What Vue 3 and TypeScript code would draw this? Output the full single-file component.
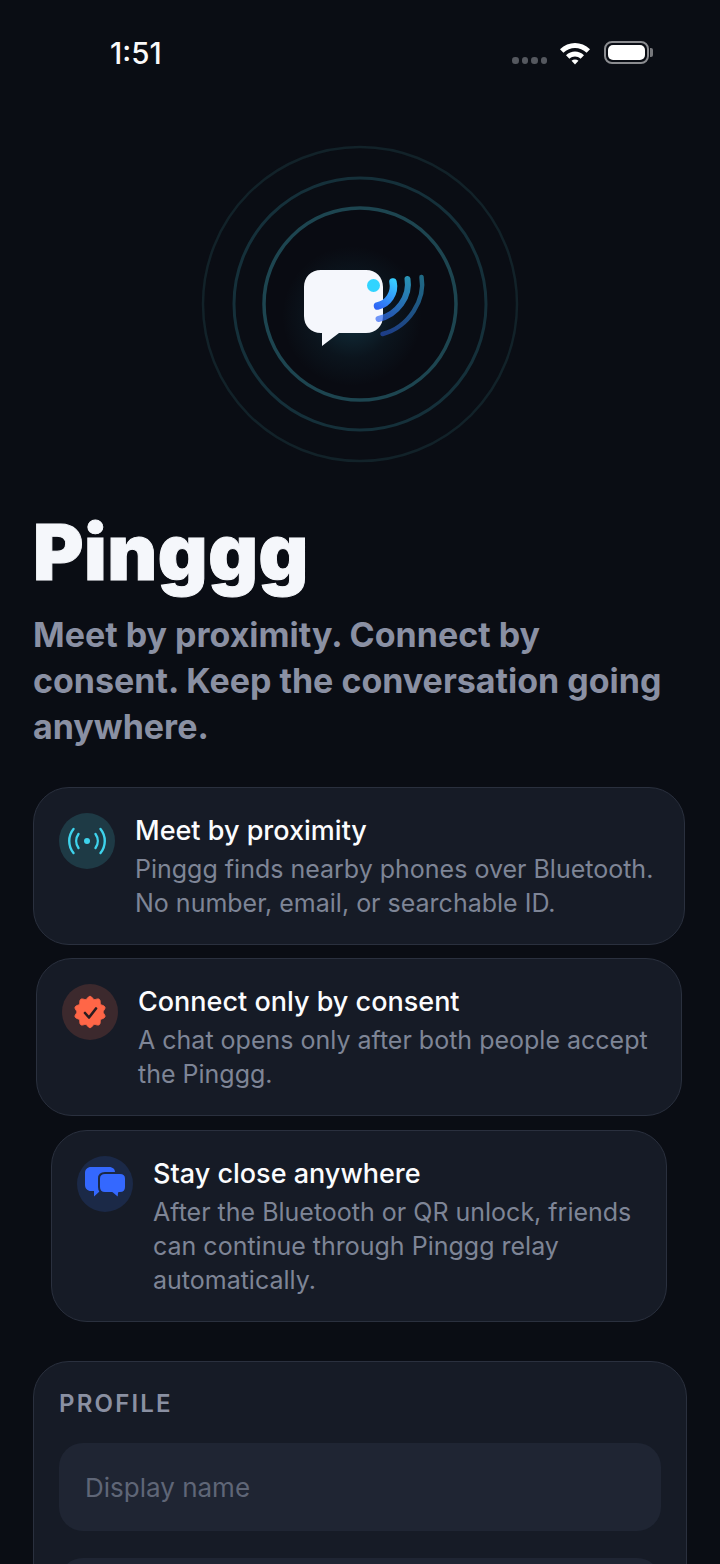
<script setup lang="ts">
interface Feature {
  key: string
  title: string
  lines: string[]
}

const features: Feature[] = [
  {
    key: 'proximity',
    title: 'Meet by proximity',
    lines: ['Pinggg finds nearby phones over Bluetooth.', 'No number, email, or searchable ID.'],
  },
  {
    key: 'consent',
    title: 'Connect only by consent',
    lines: ['A chat opens only after both people accept', 'the Pinggg.'],
  },
  {
    key: 'anywhere',
    title: 'Stay close anywhere',
    lines: ['After the Bluetooth or QR unlock, friends', 'can continue through Pinggg relay', 'automatically.'],
  },
]

// scalloped outline of the verified badge
const badgePath = (() => {
  const points: string[] = []
  for (let i = 0; i < 120; i++) {
    const angle = (i / 120) * Math.PI * 2
    const radius = 14.4 + 1.3 * Math.cos(angle * 10)
    const x = 20 + radius * Math.sin(angle)
    const y = 20 - radius * Math.cos(angle)
    points.push(`${x.toFixed(2)} ${y.toFixed(2)}`)
  }
  return `M${points.join('L')}Z`
})()
</script>

<template>
  <div class="screen">
    <header class="status">
      <span class="time">1:51</span>
      <div class="status-right">
        <span class="signal"><i></i><i></i><i></i><i></i></span>
        <svg class="wifi" width="32" height="24" viewBox="0 0 32 24">
          <path d="M1 8.200C9.600-.2 22.400-.2 31 8.200l-3.400 3.500C21 5.400 11 5.400 4.400 11.700z" fill="#fff" />
          <path d="M7 14.200c5.200-4.900 12.800-4.900 18 0l-3.400 3.500c-3.300-3-7.900-3-11.200 0z" fill="#fff" />
          <path d="M12.500 19.700c2-1.700 5-1.700 7 0L16 23.400z" fill="#fff" />
        </svg>
        <div class="battery"><span class="battery-fill"></span></div>
      </div>
    </header>

    <div class="hero">
      <svg width="320" height="320" viewBox="200 144 320 320">
        <defs>
          <radialGradient id="glow" gradientUnits="userSpaceOnUse" cx="352" cy="316" r="70">
            <stop offset="0" stop-color="#35c8f0" stop-opacity="0.2" />
            <stop offset="0.6" stop-color="#35c8f0" stop-opacity="0.05" />
            <stop offset="1" stop-color="#35c8f0" stop-opacity="0" />
          </radialGradient>
          <linearGradient id="wave" gradientUnits="userSpaceOnUse" x1="395" y1="280" x2="376" y2="308">
            <stop offset="0" stop-color="#38d0ff" />
            <stop offset="1" stop-color="#2f64f5" />
          </linearGradient>
          <linearGradient id="wave2" gradientUnits="userSpaceOnUse" x1="408" y1="278" x2="378" y2="320">
            <stop offset="0" stop-color="#38d0ff" />
            <stop offset="1" stop-color="#2f64f5" />
          </linearGradient>
          <linearGradient id="wave3" gradientUnits="userSpaceOnUse" x1="422" y1="276" x2="381" y2="334">
            <stop offset="0" stop-color="#38d0ff" />
            <stop offset="1" stop-color="#2f64f5" />
          </linearGradient>
        </defs>
        <circle cx="360" cy="304" r="157" fill="none" stroke="#122229" stroke-width="2.500" />
        <circle cx="360" cy="304" r="126" fill="none" stroke="#15303a" stroke-width="3" />
        <circle cx="360" cy="304" r="96" fill="#090b12" stroke="#1d4550" stroke-width="3.500" />
        <circle cx="352" cy="316" r="70" fill="url(#glow)" />
        <path
          d="M322 333h-1c-10 0-17-7-17-17v-29c0-10 7-17 17-17h45c10 0 17 7 17 17v29c0 10-7 17-17 17h-27l-17 13z"
          fill="#f5f7fc"
        />
        <circle cx="373.500" cy="285.500" r="6.500" fill="#31d4ff" />
        <path d="M393 282c2.500 11-5 22-15.500 24" fill="none" stroke="url(#wave)" stroke-width="7.500" stroke-linecap="round" />
        <path d="M407.500 279c3 17-10 36-29 40" fill="none" stroke="url(#wave2)" stroke-width="6" stroke-linecap="round" opacity="0.68" />
        <path d="M421.500 277c4 22-12 50-39 57" fill="none" stroke="url(#wave3)" stroke-width="4.500" stroke-linecap="round" opacity="0.48" />
      </svg>
    </div>

    <section class="intro">
      <h1>Pinggg</h1>
      <p>Meet by proximity. Connect by consent. Keep the conversation going anywhere.</p>
    </section>

    <section class="features">
      <article v-for="item in features" :key="item.key" class="feature" :class="item.key">
        <div class="feature-icon">
          <svg v-if="item.key === 'proximity'" width="44" height="40" viewBox="0 0 44 40" fill="none" stroke="#3ed3ec" stroke-width="2.400" stroke-linecap="round">
            <circle cx="22" cy="20" r="3" fill="#3ed3ec" stroke="none" />
            <path d="M13.500 13a12 12 0 0 0 0 14" />
            <path d="M30.500 13a12 12 0 0 1 0 14" />
            <path d="M8.500 8a19 19 0 0 0 0 24" />
            <path d="M35.500 8a19 19 0 0 1 0 24" />
          </svg>
          <svg v-else-if="item.key === 'consent'" width="40" height="40" viewBox="0 0 40 40">
            <path :d="badgePath" fill="#ff6647" stroke="#ff6647" stroke-width="1" stroke-linejoin="round" />
            <path d="M15 21l4 4.500 7-9" fill="none" stroke="#2a1c20" stroke-width="2.600" stroke-linecap="round" stroke-linejoin="round" />
          </svg>
          <svg v-else width="44" height="40" viewBox="0 0 44 40">
            <path d="M8 3h18c4 0 6 2.300 6 5.500V21c0 3.500-2 6-6 6H17l-6 5.500V27H8c-3.500 0-6-2.500-6-6V9c0-3.500 2.500-6 6-6z" fill="#3468ff" />
            <path d="M22 9h15c3.800 0 6 2.300 6 5.500V23c0 3.600-2.200 6-6 6h-1l-.5 5.500L29 29h-7c-3.800 0-6-2.400-6-6v-8.500c0-3.200 2.200-5.500 6-5.500z" fill="#3468ff" stroke="#1b2947" stroke-width="2" stroke-linejoin="round" />
          </svg>
        </div>
        <div class="feature-text">
          <h2>{{ item.title }}</h2>
          <p v-for="line in item.lines" :key="line">{{ line }}</p>
        </div>
      </article>
    </section>

    <section class="profile">
      <h3>PROFILE</h3>
      <input class="field" type="text" placeholder="Display name" />
      <div class="field field-next"></div>
    </section>
  </div>
</template>

<style>
html,
body {
  background: #0a0d14;
}
</style>

<style scoped>
.screen {
  width: 720px;
  height: 1564px;
  overflow: hidden;
  background: #0a0d14;
  font-family: Inter, "Noto Sans", sans-serif;
  color: #fff;
}

.status {
  height: 106px;
  padding: 0 68px 0 110px;
  display: flex;
  justify-content: space-between;
  align-items: flex-start;
  box-sizing: border-box;
}

.time {
  margin-top: 35px;
  font-size: 29.500px;
  line-height: 36px;
  font-weight: 500;
  color: #fafafa;
}

.status-right {
  margin-top: 41px;
  display: flex;
  align-items: flex-start;
}

.signal {
  display: flex;
  gap: 3px;
  margin-top: 16px;
  margin-right: 12px;
}

.signal i {
  width: 6.500px;
  height: 6.500px;
  border-radius: 50%;
  background: #55585f;
}

.wifi {
  display: block;
  margin-right: 13px;
}

.battery {
  position: relative;
  width: 45px;
  height: 23px;
  box-sizing: border-box;
  border: 2px solid #8b8c90;
  border-radius: 8px;
  padding: 2px;
  margin-right: 3px;
}

.battery::after {
  content: "";
  position: absolute;
  right: -6px;
  top: 5px;
  width: 3px;
  height: 9px;
  border-radius: 0 2px 2px 0;
  background: #77787c;
}

.battery-fill {
  display: block;
  height: 100%;
  border-radius: 5px;
  background: #fff;
}

.hero {
  display: flex;
  justify-content: center;
  margin-top: 38px;
}

.hero svg {
  display: block;
}

.intro {
  margin-top: 44px;
  padding: 0 33px;
}

.intro h1 {
  margin: 0;
  font-size: 77px;
  line-height: 88px;
  font-weight: 900;
  letter-spacing: 0.500px;
  -webkit-text-stroke: 1px #f5f7fb;
  color: #f5f7fb;
}

.intro p {
  margin: 16px 0 0;
  width: 640px;
  font-size: 34px;
  line-height: 46px;
  font-weight: 700;
  color: #8a90a3;
}

.features {
  margin-top: 37px;
  display: flex;
  flex-direction: column;
  gap: 13px;
}

.feature {
  display: flex;
  gap: 20px;
  padding: 25px 24px 24px 25px;
  box-sizing: border-box;
  background: #161b26;
  border: 1px solid #2a303e;
  border-radius: 36px;
}

.feature.proximity {
  margin: 0 35px 0 33px;
}

.feature.consent {
  margin: 0 38px 0 36px;
}

.feature.anywhere {
  margin: 1px 53px 0 51px;
}

.feature-icon {
  width: 56px;
  height: 56px;
  flex: none;
  border-radius: 50%;
  display: flex;
  align-items: center;
  justify-content: center;
}

.proximity .feature-icon {
  background: #1e3a45;
}

.consent .feature-icon {
  background: #3c292d;
}

.anywhere .feature-icon {
  background: #1b2947;
}

.feature-text h2 {
  margin: 1px 0 4px;
  font-size: 27px;
  line-height: 34px;
  font-weight: 500;
  color: #fbfcfe;
}

.feature-text p {
  margin: 0;
  font-size: 25px;
  line-height: 34px;
  font-weight: 400;
  color: #7e8596;
  white-space: nowrap;
}

.profile {
  margin: 39px 33px 0 33px;
  padding: 27px 25px 0;
  box-sizing: border-box;
  height: 300px;
  background: #161b26;
  border: 1px solid #2a303e;
  border-radius: 36px;
}

.profile h3 {
  margin: 0;
  font-size: 24px;
  line-height: 30px;
  font-weight: 600;
  letter-spacing: 2.200px;
  color: #8a90a2;
}

.field {
  display: block;
  width: 100%;
  height: 88px;
  box-sizing: border-box;
  margin-top: 24px;
  padding: 0 26px;
  border: none;
  outline: none;
  border-radius: 24px;
  background: #1f2533;
  font-family: inherit;
  font-size: 26px;
  color: #fff;
}

.field-next {
  margin-top: 27px;
}

.field::placeholder {
  color: #5f6677;
  opacity: 1;
}
</style>
